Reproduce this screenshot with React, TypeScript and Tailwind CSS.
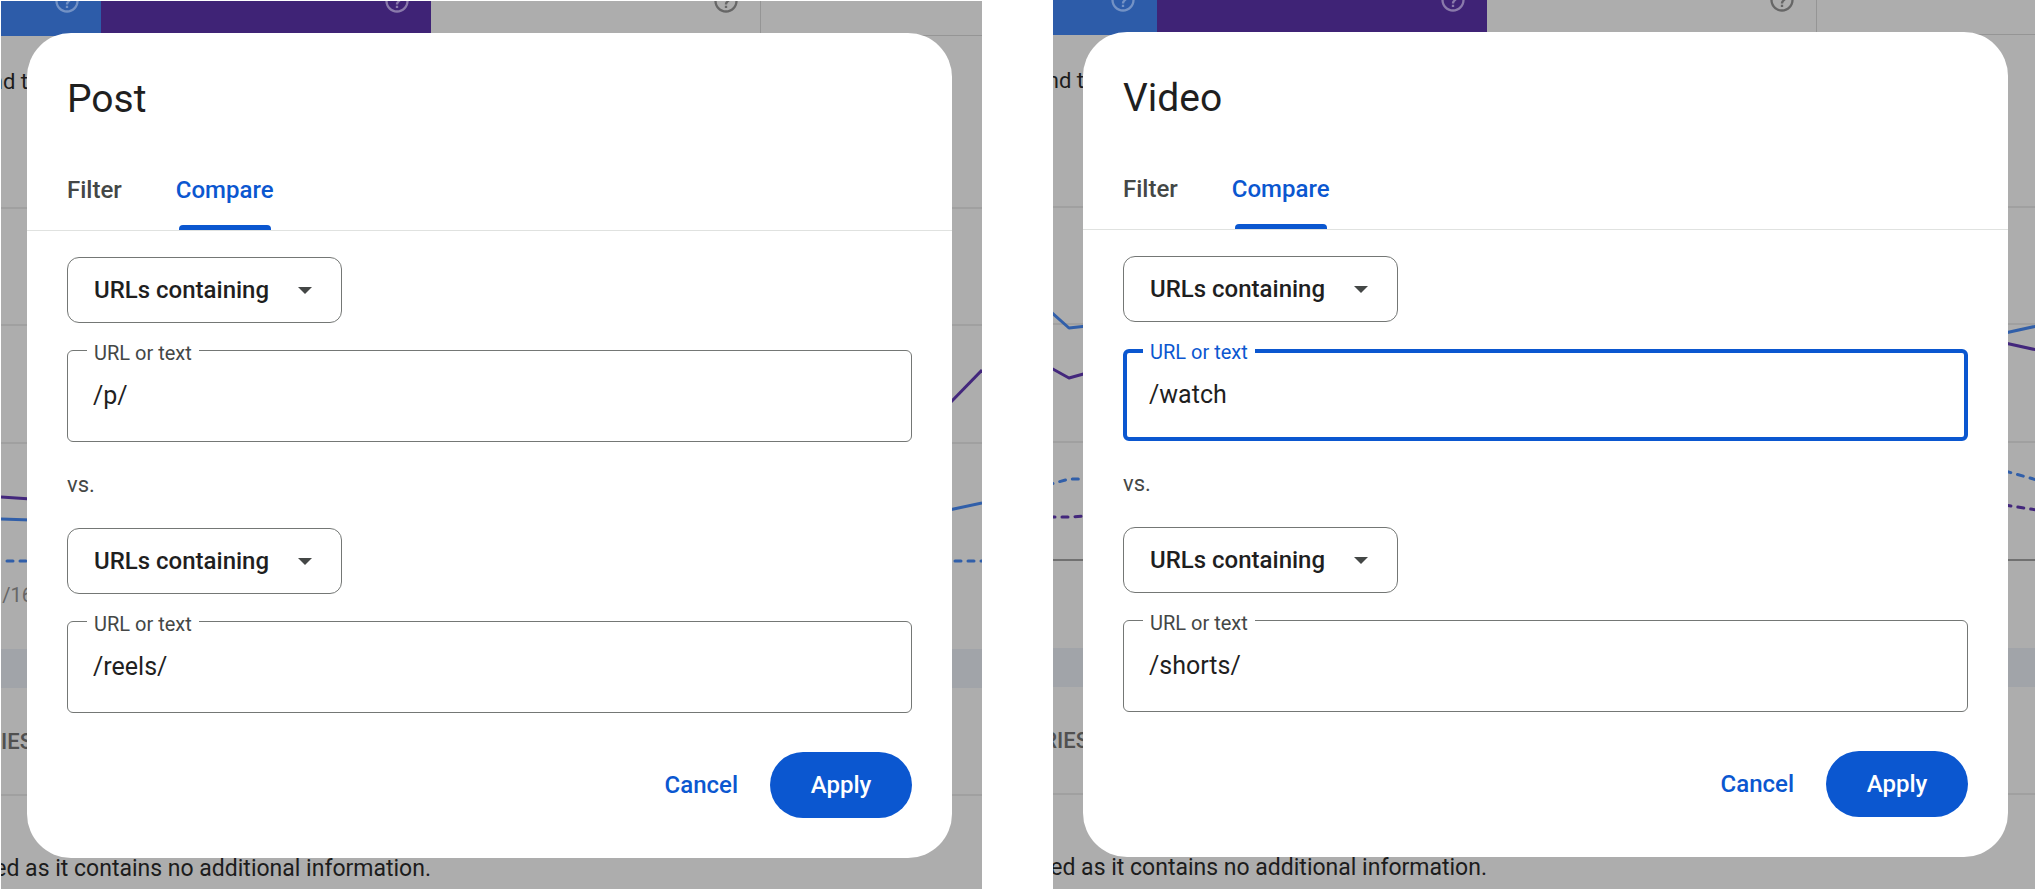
import { useId, useState } from "react";
import { MdHelpOutline } from "react-icons/md";

type Series = { points: string; color: string; dashed?: boolean; offset?: number };

type PanelData = {
  title: string;
  first: string;
  second: string;
  focusFirst?: boolean;
  chartWidth: number;
  axis: boolean;
  dateLabel?: string;
  series: Series[];
};

const BLUE = "#315fa9";
const PURPLE = "#43277c";

const postPanel: PanelData = {
  title: "Post",
  first: "/p/",
  second: "/reels/",
  chartWidth: 985,
  axis: false,
  dateLabel: "/16",
  series: [
    { points: "4,389 34,391", color: PURPLE },
    { points: "952,296 985,262", color: PURPLE },
    { points: "4,411 34,412", color: BLUE },
    { points: "952,402 985,395", color: BLUE },
    { points: "4,453 34,453", color: BLUE, dashed: true, offset: 7 },
    { points: "952,453 985,453", color: BLUE, dashed: true, offset: 7 },
  ],
};

const videoPanel: PanelData = {
  title: "Video",
  first: "/watch",
  second: "/shorts/",
  focusFirst: true,
  chartWidth: 982,
  axis: true,
  series: [
    { points: "-2,205 16,221 34,219", color: BLUE },
    { points: "952,226 984,219", color: BLUE },
    { points: "-2,261 16,271 34,266", color: PURPLE },
    { points: "952,236 984,243", color: PURPLE },
    { points: "-2,377 16,372 34,372", color: BLUE, dashed: true, offset: 4 },
    { points: "952,364 984,373", color: BLUE, dashed: true, offset: 0 },
    { points: "-2,410 16,410 34,409", color: PURPLE, dashed: true, offset: 2 },
    { points: "952,398 984,403", color: PURPLE, dashed: true, offset: 0 },
  ],
};

function MetricTile({ className }: { className: string }) {
  return (
    <div className={`flex justify-end pr-5 ${className}`}>
      <MdHelpOutline size={28} className="-mt-3.5 shrink-0" />
    </div>
  );
}

function Chart({ data }: { data: PanelData }) {
  return (
    <svg
      viewBox={`0 0 ${data.chartWidth} 470`}
      preserveAspectRatio="none"
      className="block h-[470px] w-full"
      aria-hidden="true"
    >
      {[100, 217, 335].map((y) => (
        <line key={y} x1="0" x2={data.chartWidth} y1={y} y2={y} stroke="#a0a0a0" strokeWidth="2" />
      ))}
      {data.axis && <line x1="0" x2={data.chartWidth} y1="453" y2="453" stroke="#717171" strokeWidth="2" />}
      {data.series.map((s, i) => (
        <polyline
          key={i}
          points={s.points}
          fill="none"
          stroke={s.color}
          strokeWidth="3"
          strokeLinejoin="round"
          strokeLinecap={s.dashed ? "round" : "butt"}
          strokeDasharray={s.dashed ? "6 7" : undefined}
          strokeDashoffset={s.offset}
        />
      ))}
    </svg>
  );
}

function ReportPage({ data, className }: { data: PanelData; className: string }) {
  return (
    <div
      aria-hidden="true"
      className={`col-start-1 row-start-1 min-w-0 bg-[#adadad] text-[23px] leading-8 whitespace-nowrap ${className}`}
    >
      <div className="flex h-[35px] border-b border-[#959595]">
        <MetricTile className="-mb-px w-[104px] bg-[#2d5ca9] text-[#7392c5]" />
        <MetricTile className="-mb-px w-[330px] bg-[#3f2376] text-[#8a7aab]" />
        <MetricTile className="w-[330px] border-r border-[#959595] text-[#666666]" />
      </div>
      <div className="flex h-[72px] w-[31px] justify-end pt-[30px] text-[22px] text-[#1c1c1c]">nd t</div>
      <Chart data={data} />
      <div className="flex h-[34px] w-9 items-center justify-end text-[20px] text-[#666666]">
        {data.dateLabel}
      </div>
      <div className="mt-[37px] h-[39px] bg-[#a1a4a9]" />
      <div className="border-b-2 border-[#a0a0a0]">
        <div className="flex h-[106px] w-9 items-center justify-end pt-0.5 text-[22px] font-medium text-[#505050]">
          RIES
        </div>
      </div>
      <div className="mt-[57px] flex w-[434px] justify-end text-[#1c1c1c]">
        ed as it contains no additional information.
      </div>
    </div>
  );
}

function MatchSelect() {
  return (
    <div className="relative w-[275px]">
      <select
        aria-label="Match type"
        className="h-[66px] w-full cursor-pointer appearance-none rounded-xl border border-[#747775] bg-white pr-12 pl-[26px] text-2xl font-medium text-[#1f1f1f] outline-none"
      >
        <option>URLs containing</option>
        <option>URLs not containing</option>
        <option>Exact URL</option>
      </select>
      <svg
        viewBox="0 0 14 7"
        className="pointer-events-none absolute top-[30px] right-[30px] h-[7px] w-[14px]"
        aria-hidden="true"
      >
        <path d="M0 0h14L7 7z" fill="#444746" />
      </svg>
    </div>
  );
}

function UrlField({ value, highlighted }: { value: string; highlighted?: boolean }) {
  const id = useId();
  const [text, setText] = useState(value);
  return (
    <div className="relative">
      <input
        id={id}
        value={text}
        onChange={(e) => setText(e.target.value)}
        className={`block h-[92px] w-full rounded-md bg-white pb-0.5 text-[25px] text-[#1f1f1f] outline-none ${
          highlighted ? "border-4 border-[#0b57d0] px-[22px]" : "border border-[#747775] px-[25px]"
        }`}
      />
      <label
        htmlFor={id}
        className={`absolute -top-[9px] left-5 bg-white px-[7px] text-[20px] leading-6 ${
          highlighted ? "text-[#0b57d0]" : "text-[#444746]"
        }`}
      >
        URL or text
      </label>
    </div>
  );
}

function FilterDialog({ data, className }: { data: PanelData; className: string }) {
  const titleId = useId();
  return (
    <div
      role="dialog"
      aria-labelledby={titleId}
      className={`z-10 col-start-1 row-start-1 mt-8 self-start rounded-[44px] bg-white pt-[42px] pb-10 ${className}`}
    >
      <h2 id={titleId} className="px-10 text-[39px] leading-[48px] text-[#1f1f1f]">
        {data.title}
      </h2>
      <div role="tablist" className="mt-6 flex gap-[50px] border-b border-[#e0e2e0] px-10 text-2xl font-medium">
        <button type="button" role="tab" aria-selected="false" className="h-[83px] pt-0.5 text-[#444746]">
          Filter
        </button>
        <button
          type="button"
          role="tab"
          aria-selected="true"
          className="flex h-[83px] flex-col items-center justify-end px-1 text-[#0b57d0]"
        >
          <span className="flex flex-1 items-center pt-[7px]">Compare</span>
          <span className="h-[5px] w-[92px] rounded-t bg-[#0b57d0]" />
        </button>
      </div>
      <form className="flex flex-col gap-[27px] px-10 pt-[26px]" onSubmit={(e) => e.preventDefault()}>
        <MatchSelect />
        <UrlField value={data.first} highlighted={data.focusFirst} />
        <p className="text-[22px] leading-8 text-[#444746]">vs.</p>
        <MatchSelect />
        <UrlField value={data.second} />
        <div className="mt-3 flex justify-end gap-8 text-2xl font-medium">
          <button type="button" className="h-[66px] text-[#0b57d0]">
            Cancel
          </button>
          <button type="submit" className="h-[66px] w-[142px] rounded-full bg-[#0b57d0] text-white">
            Apply
          </button>
        </div>
      </form>
    </div>
  );
}

export default function App() {
  return (
    <main className="grid min-h-screen grid-cols-2 gap-[71px] overflow-hidden bg-white font-['Roboto',sans-serif]">
      <div className="flex min-w-0 pt-px pl-px">
        <section className="grid min-w-0 flex-1 grid-cols-[minmax(0,1fr)] overflow-hidden">
          <ReportPage data={postPanel} className="-ml-1" />
          <FilterDialog data={postPanel} className="mr-[30px] ml-[26px]" />
        </section>
      </div>
      <section className="grid min-w-0 grid-cols-[minmax(0,1fr)] overflow-hidden">
        <ReportPage data={videoPanel} className="" />
        <FilterDialog data={videoPanel} className="mr-[27px] ml-[30px]" />
      </section>
    </main>
  );
}
